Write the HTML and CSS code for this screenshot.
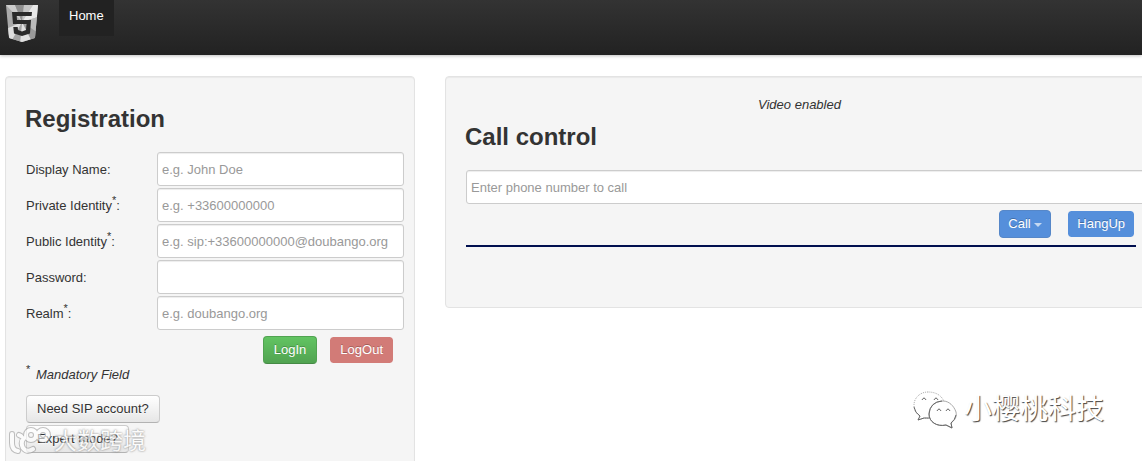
FILE: index.html
```html
<!DOCTYPE html>
<html lang="en">
<head>
    <meta charset="UTF-8">
    <meta name="viewport" content="width=device-width, initial-scale=1.0">
    <title>Call</title>
    <link rel="stylesheet" href="styles.css">
</head>
<body>

<header class="navbar">
    <svg class="logo" viewBox="0 0 32 37" aria-hidden="true">
        <defs>
            <clipPath id="shield">
                <path d="M0 0H32L29 33L16 37L3 33Z"/>
            </clipPath>
        </defs>
        <g clip-path="url(#shield)">
            <path d="M0 0H32V37H0Z" fill="#aaa"/>
            <path d="M16 17L0 0H9Z" fill="#ccc"/>
            <path d="M16 17L9 0H18Z" fill="#8f8f8f"/>
            <path d="M16 17L18 0H27Z" fill="#c4c4c4"/>
            <path d="M16 17L27 0H32V12Z" fill="#e8e8e8"/>
            <path d="M16 17L32 12V28Z" fill="#bbb"/>
            <path d="M16 17L32 28L26 37Z" fill="#999"/>
            <path d="M16 17L26 37H14Z" fill="#e0e0e0"/>
            <path d="M16 17L14 37H5Z" fill="#a4a4a4"/>
            <path d="M16 17L5 37L0 24Z" fill="#dedede"/>
        </g>
        <path d="M26 7H6L7 19H20.500L20 25L16 26.500L12 25L11.700 22H7.300L8 28.500L16 31L24 28.500L25 15H11L10.700 11H25.600Z" fill="#2a2a2a"/>
    </svg>
    <nav>
        <a class="nav-link" href="#">Home</a>
    </nav>
</header>

<main class="container">
    <section class="well registration">
        <h2>Registration</h2>
        <form id="registrationForm">
            <div class="fields">
                <label for="displayName">Display Name:</label>
                <input type="text" id="displayName" placeholder="e.g. John Doe">
                <label for="privateIdentity">Private Identity<sup>*</sup>:</label>
                <input type="text" id="privateIdentity" placeholder="e.g. +33600000000">
                <label for="publicIdentity">Public Identity<sup>*</sup>:</label>
                <input type="text" id="publicIdentity" placeholder="e.g. sip:+33600000000@doubango.org">
                <label for="password">Password:</label>
                <input type="password" id="password">
                <label for="realm">Realm<sup>*</sup>:</label>
                <input type="text" id="realm" placeholder="e.g. doubango.org">
            </div>
            <div class="buttons">
                <button type="button" class="btn btn-success">LogIn</button>
                <button type="button" class="btn btn-danger" disabled>LogOut</button>
            </div>
            <p class="mandatory"><sup>*</sup> <i>Mandatory Field</i></p>
            <div class="links">
                <a class="btn" href="#">Need SIP account?</a>
                <a class="btn" href="#">Expert mode?</a>
            </div>
        </form>
    </section>

    <section class="well call">
        <p class="status"><i>Video enabled</i></p>
        <h2>Call control</h2>
        <input type="text" class="phone" aria-label="Phone number" placeholder="Enter phone number to call">
        <div class="buttons call-buttons">
            <button type="button" class="btn btn-primary">Call <span class="caret"></span></button>
            <button type="button" class="btn btn-primary btn-hangup" disabled>HangUp</button>
        </div>
    </section>
</main>

<div class="mark mark-left">
    <svg class="mark-logo" viewBox="0 0 42 28" aria-hidden="true">
        <g fill="none" stroke-linecap="round">
            <g stroke="#999" stroke-width="6">
                <path d="M3 7V16Q3 23 9 24M10 8L12 9M24 22Q18 26 14 21Q11 15 15 11"/>
                <circle cx="22" cy="8" r="5"/><circle cx="34" cy="8" r="5"/>
            </g>
            <g stroke="#fff" stroke-width="4">
                <path d="M3 7V16Q3 23 9 24M10 8L12 9M24 22Q18 26 14 21Q11 15 15 11"/>
                <circle cx="22" cy="8" r="5"/><circle cx="34" cy="8" r="5"/>
            </g>
        </g>
    </svg>
    <span>大数跨境</span>
</div>

<div class="mark mark-right">
    <svg class="chat-logo" viewBox="0 0 46 40" aria-hidden="true">
        <g fill="#fff" stroke="#aaa" stroke-width="1">
            <path d="M16 2C8 2 2 8 2 15C2 20 4 23 8 26L6 30L12 28C18 29 24 28 27 25C33 21 34 13 30 8C27 4 22 2 16 2Z" stroke-dasharray="1 1"/>
            <path d="M31 11C23 11 17 17 17 24C17 32 25 37 34 35L40 38L39 33C43 30 45 27 44 22C42 16 37 11 31 11Z"/>
        </g>
        <g fill="none" stroke="#666" stroke-width="1">
            <path d="M2 17Q3 23 8 26L6 30L12 28L17 28M30 11Q18 12 17 24C17 32 25 37 34 35L40 38L39 33Q43 30 44 25"/>
            <path d="M10 10Q12 6 14 10M22 10Q24 6 26 10M25 21Q27 17 29 21M34 21Q36 17 38 21"/>
        </g>
    </svg>
    <span>小樱桃科技</span>
</div>

</body>
</html>
```
FILE: styles.css
```css
body {
    margin: 0;
    overflow: hidden;
    font-family: "Liberation Sans", Arial, "Noto Sans CJK SC", sans-serif;
    font-size: 13px;
    line-height: 18px;
    color: #333;
    background: #fff;
}

.navbar {
    display: flex;
    align-items: flex-start;
    gap: 21px;
    height: 55px;
    padding-left: 6px;
    background: linear-gradient(#333, #222);
    box-shadow: 0 1px 3px rgba(0, 0, 0, 0.25);
}

.logo {
    width: 32px;
    height: 37px;
    margin-top: 5px;
}

.nav-link {
    display: block;
    padding: 7px 10px 11px;
    color: #fff;
    text-decoration: none;
    background: #222;
}

.container {
    display: grid;
    grid-template-columns: 410px 1fr;
    align-items: start;
    gap: 30px;
    margin: 21px -20px 0 5px;
}

.well {
    padding: 19px;
    background: #f5f5f5;
    border: 1px solid #e3e3e3;
    border-radius: 4px;
    box-shadow: inset 0 1px 1px rgba(0, 0, 0, 0.05);
    box-sizing: border-box;
}

h2 {
    margin: 0 0 15px;
    font-size: 24px;
    line-height: 36px;
}

.registration {
    padding-top: 24px;
}

.fields {
    display: grid;
    grid-template-columns: 129px 247px;
    align-items: center;
    gap: 2px;
    padding: 0 1px;
}

label {
    padding-top: 2px;
}

sup {
    position: relative;
    top: -6px;
    font-size: 11px;
    line-height: 0;
    vertical-align: baseline;
}

input {
    width: 100%;
    height: 34px;
    padding: 4px;
    box-sizing: border-box;
    font: inherit;
    color: #555;
    background: #fff;
    border: 1px solid #ccc;
    border-radius: 3px;
    box-shadow: inset 0 1px 1px rgba(0, 0, 0, 0.075);
}

input::placeholder {
    color: #999;
}

.buttons {
    display: flex;
    justify-content: flex-end;
    align-items: center;
    gap: 12px;
    padding: 6px 1px 0 0;
}

.btn {
    display: inline-block;
    padding: 4px 10px;
    font: inherit;
    color: #333;
    text-decoration: none;
    text-shadow: 0 1px 1px rgba(255, 255, 255, 0.75);
    background: linear-gradient(#fff, #e6e6e6);
    border: 1px solid #ccc;
    border-bottom-color: #b3b3b3;
    border-radius: 4px;
    cursor: pointer;
}

.btn-success,
.btn-danger,
.btn-primary {
    color: #fff;
    text-shadow: 0 -1px 0 rgba(0, 0, 0, 0.25);
}

.btn-success {
    background: linear-gradient(#62c462, #51a351);
    border-color: #51a351 #51a351 #458a45;
}

.btn-danger {
    background: #d27b77;
    background-clip: padding-box;
    border-color: #f5f5f5;
}

.btn-primary {
    padding: 4px 8px;
    background: #558fdb;
    border-color: #5687c8;
}

.btn-hangup {
    padding: 4px 9px;
    background-clip: padding-box;
    border-color: #f5f5f5;
}

.caret {
    display: inline-block;
    border-top: 4px solid #c5d9f2;
    border-left: 4px solid transparent;
    border-right: 4px solid transparent;
    vertical-align: middle;
}

.mandatory {
    margin: 2px 0 11px 1px;
}

.mandatory i {
    padding-left: 2px;
}

.links {
    display: flex;
    flex-direction: column;
    align-items: flex-start;
    gap: 2px;
    padding-left: 1px;
}

.status {
    margin: 0 8px 5px 0;
    text-align: center;
}

.call {
    min-height: 232px;
}

.phone {
    width: calc(100% + 10px);
    margin-left: 1px;
}

.call-buttons {
    gap: 16px;
    margin: 0 6px 0 1px;
    padding-bottom: 7px;
    border-bottom: 2px solid #000f4f;
}

/* Watermarks over the page corners */
.mark {
    position: absolute;
    display: flex;
    align-items: center;
    color: #fff;
    white-space: nowrap;
    pointer-events: none;
}

.mark-left {
    left: 9px;
    bottom: 4px;
    gap: 3px;
    font-size: 23px;
    line-height: 32px;
    text-shadow: 0 0 2px #777, 0 0 2px #777;
    opacity: 0.6;
}

.mark-logo {
    width: 42px;
    height: 28px;
}

.mark-right {
    right: 38px;
    bottom: 31px;
    gap: 6px;
    font-size: 28px;
    line-height: 40px;
    text-shadow: 1px 1px 1px #444;
}

.chat-logo {
    width: 46px;
    height: 40px;
}
```
